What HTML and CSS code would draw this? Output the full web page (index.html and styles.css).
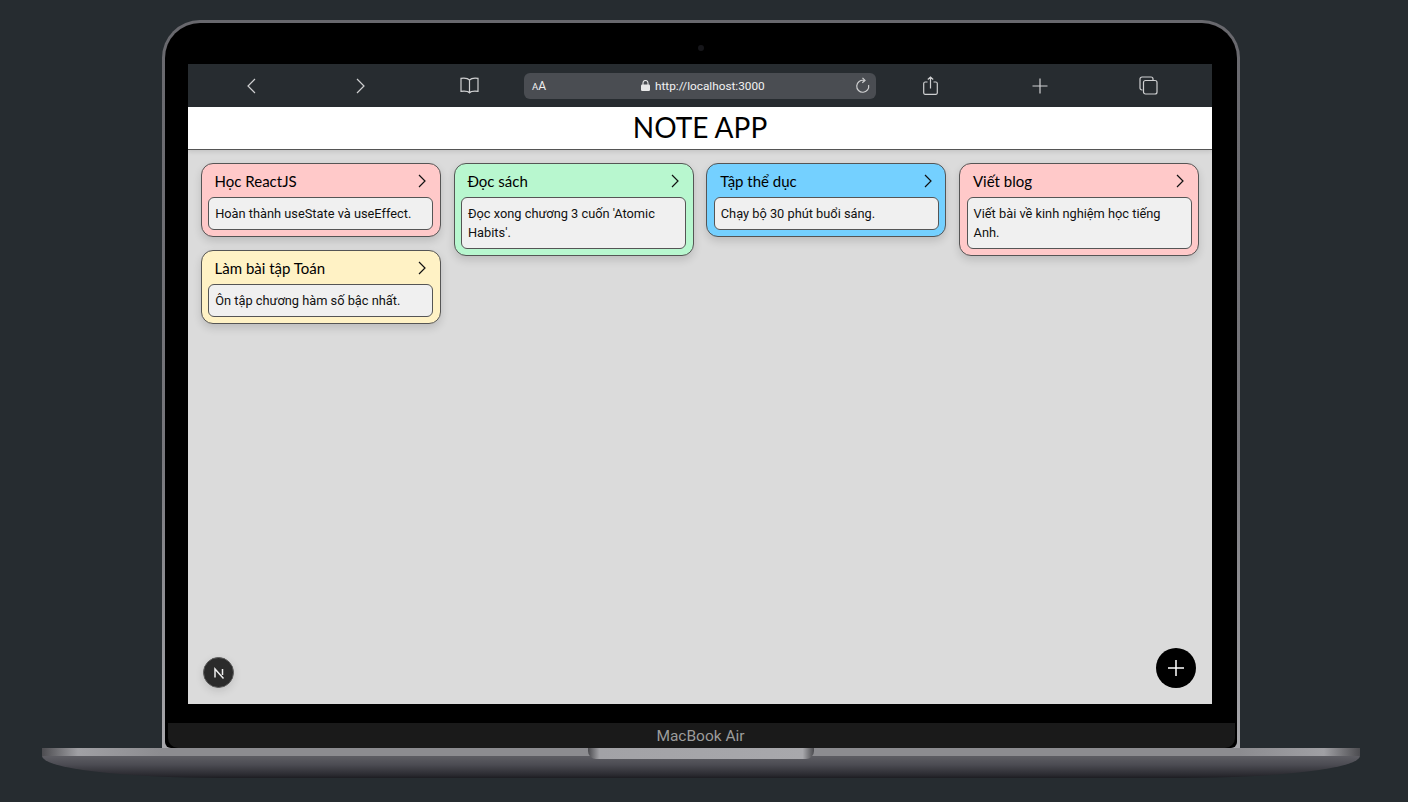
FILE: index.html
```html
<!DOCTYPE html>
<html lang="vi">

<head>
    <meta charset="UTF-8">
    <meta name="viewport" content="width=device-width, initial-scale=1.0">
    <title>Note App</title>
    <link rel="stylesheet" href="styles.css">
</head>

<body>
    <div class="macbook">
        <div class="lid">
            <div class="bezel">
                <div class="camera"></div>
                <div class="screen">
                    <!-- Thanh trinh duyet -->
                    <div class="toolbar">
                        <div class="tool">
                            <svg width="12" height="18" viewBox="0 0 12 18"><path d="M9 2 2 9l7 7"/></svg>
                        </div>
                        <div class="tool">
                            <svg width="12" height="18" viewBox="0 0 12 18"><path d="m2 2 7 7-7 7"/></svg>
                        </div>
                        <div class="tool">
                            <svg width="19" height="17" viewBox="0 0 19 17"><path d="M9.500 3C8 1.300 4.500.8 1 1.300v13c3.500-.4 7-.3 8.500 1.500 1.500-1.800 5-1.900 8.500-1.500v-13C14.500.8 11 1.300 9.500 3ZM9.500 3v12.800"/></svg>
                        </div>
                        <div class="address">
                            <span class="aa"><small>A</small>A</span>
                            <span class="url">
                                <svg width="9" height="11" viewBox="0 0 9 11"><rect x="0" y="4.500" width="9" height="6.500" rx="1.200"/><path class="shackle" d="M2 5V3a2.500 2.500 0 0 1 5 0v2"/></svg>
                                http://localhost:3000
                            </span>
                            <svg class="reload" width="15" height="17" viewBox="0 0 15 17"><path d="M9 3.400A6 6 0 1 0 13.600 8"/><path d="M7.500 .8 10 3.400 7.300 5.700"/></svg>
                        </div>
                        <div class="tool">
                            <svg width="15" height="19" viewBox="0 0 15 19"><path d="M4.500 6H2A1.500 1.500 0 0 0 .7 7.500v9.500A1.500 1.500 0 0 0 2 18.400h11a1.500 1.500 0 0 0 1.300-1.400V7.500A1.500 1.500 0 0 0 13 6h-2.500M7.500 12.500V1M4.800 3.500 7.500 1l2.700 2.500"/></svg>
                        </div>
                        <div class="tool">
                            <svg width="16" height="16" viewBox="0 0 16 16"><path d="M8 .5v15M.5 8h15"/></svg>
                        </div>
                        <div class="tool">
                            <svg width="19" height="19" viewBox="0 0 19 19"><path d="M3.500 14H3a2 2 0 0 1-2-2V3a2 2 0 0 1 2-2h9a2 2 0 0 1 2 2v1"/><rect x="4.500" y="4.500" width="13.500" height="13.500" rx="2"/></svg>
                        </div>
                    </div>

                    <div class="page">
                        <h1 class="app-title">NOTE APP</h1>

                        <div class="board">
                            <div class="column">
                                <div class="note pink">
                                    <div class="note-head">
                                        <span>Học ReactJS</span>
                                        <svg width="10" height="14" viewBox="0 0 10 14"><path d="m2 1 6 6-6 6"/></svg>
                                    </div>
                                    <p class="note-body">Hoàn thành useState và useEffect.</p>
                                </div>
                                <div class="note yellow">
                                    <div class="note-head">
                                        <span>Làm bài tập Toán</span>
                                        <svg width="10" height="14" viewBox="0 0 10 14"><path d="m2 1 6 6-6 6"/></svg>
                                    </div>
                                    <p class="note-body">Ôn tập chương hàm số bậc nhất.</p>
                                </div>
                            </div>
                            <div class="column">
                                <div class="note green">
                                    <div class="note-head">
                                        <span>Đọc sách</span>
                                        <svg width="10" height="14" viewBox="0 0 10 14"><path d="m2 1 6 6-6 6"/></svg>
                                    </div>
                                    <p class="note-body">Đọc xong chương 3 cuốn 'Atomic Habits'.</p>
                                </div>
                            </div>
                            <div class="column">
                                <div class="note blue">
                                    <div class="note-head">
                                        <span>Tập thể dục</span>
                                        <svg width="10" height="14" viewBox="0 0 10 14"><path d="m2 1 6 6-6 6"/></svg>
                                    </div>
                                    <p class="note-body">Chạy bộ 30 phút buổi sáng.</p>
                                </div>
                            </div>
                            <div class="column">
                                <div class="note pink">
                                    <div class="note-head">
                                        <span>Viết blog</span>
                                        <svg width="10" height="14" viewBox="0 0 10 14"><path d="m2 1 6 6-6 6"/></svg>
                                    </div>
                                    <p class="note-body">Viết bài về kinh nghiệm học tiếng Anh.</p>
                                </div>
                            </div>
                        </div>

                        <!-- Nut Next dev va nut them ghi chu -->
                        <div class="dev-badge">
                            <svg width="14" height="14" viewBox="0 0 14 14"><path d="M3 11.500V3l8.500 9.500M10.500 3v6"/></svg>
                        </div>
                        <button class="add-btn">
                            <svg width="16" height="16" viewBox="0 0 16 16"><path d="M8 0v16M0 8h16"/></svg>
                        </button>
                    </div>
                </div>
                <div class="chin">MacBook Air</div>
            </div>
        </div>
        <div class="base">
            <div class="notch"></div>
        </div>
    </div>
</body>

</html>
```

FILE: styles.css
```css
body {
    margin: 0;
    height: 802px;
    overflow: hidden;
    background-color: #262c30;
    font-family: Roboto, Arial, sans-serif;
}

.macbook {
    display: flex;
    flex-direction: column;
    align-items: center;
    padding-top: 20px;
}

.lid {
    width: 1072px;
    height: 725px;
    padding: 3px 3px 0;
    margin-right: 6px;
    border-radius: 38px 38px 0 0;
    background: linear-gradient(#68686d, #77777c 60%, #a8a8ac);
}

.bezel {
    position: relative;
    height: 100%;
    box-sizing: border-box;
    padding: 41px 25px 0 23px;
    border-radius: 35px 35px 6px 6px;
    background-color: #000;
    display: flex;
    flex-direction: column;
}

.camera {
    position: absolute;
    top: 22px;
    left: 533px;
    width: 6px;
    height: 6px;
    border-radius: 50%;
    background-color: #16161a;
}

.screen {
    width: 1024px;
    height: 640px;
    flex-shrink: 0;
    display: flex;
    flex-direction: column;
}

.toolbar {
    height: 43px;
    flex-shrink: 0;
    padding: 0 9px;
    background-color: #272c30;
    display: flex;
    align-items: center;
}

.tool {
    width: 109px;
    display: flex;
    justify-content: center;
    align-items: center;
}

.toolbar svg {
    fill: none;
    stroke: #cfd0d1;
    stroke-width: 1.200;
}

.address {
    width: 352px;
    height: 26px;
    box-sizing: border-box;
    padding: 0 6px 0 8px;
    border-radius: 6px;
    background-color: #4a4d52;
    color: #f2f2f2;
    position: relative;
    display: flex;
    align-items: center;
    justify-content: space-between;
}

.aa {
    font-size: 12px;
}

.aa small {
    font-size: 9.500px;
}

.url {
    position: absolute;
    left: 117px;
    display: flex;
    align-items: center;
    gap: 5px;
    font-size: 11.800px;
}

.toolbar .url svg {
    fill: #e8e8e8;
    stroke: none;
}

.toolbar .url .shackle {
    fill: none;
    stroke: #e8e8e8;
    stroke-width: 1.100;
}

.page {
    position: relative;
    flex: 1;
    background-color: #dbdbdb;
}

.app-title {
    height: 42px;
    margin: 0;
    background-color: white;
    border-bottom: 1px solid #555;
    box-shadow: 0 2px 4px rgba(0, 0, 0, 0.1);
    color: #000;
    font-family: Lato, sans-serif;
    font-size: 28px;
    font-weight: 400;
    line-height: 40px;
    text-align: center;
}

.board {
    display: grid;
    grid-template-columns: repeat(4, 1fr);
    gap: 12.800px;
    padding: 12.800px;
}

.column {
    display: flex;
    flex-direction: column;
    gap: 12.800px;
}

.note {
    padding: 0 6.400px 6.400px;
    border: 1px solid #555;
    border-radius: 12px;
    box-shadow: 0 4px 8px rgba(0, 0, 0, 0.14);
}

.pink {
    background-color: #ffc9c9;
}

.yellow {
    background-color: #fff2c5;
}

.green {
    background-color: #b8f7cf;
}

.blue {
    background-color: #74d0ff;
}

.note-head {
    height: 32.800px;
    box-sizing: border-box;
    padding: 1px 6.400px 0;
    display: flex;
    justify-content: space-between;
    align-items: center;
    color: #000;
    font-family: Lato, sans-serif;
    font-size: 15px;
}

.note-head svg {
    fill: none;
    stroke: #111;
    stroke-width: 1.200;
}

.note-body {
    margin: 0;
    padding: 6px;
    border: 1px solid #555;
    border-radius: 6px;
    background-color: #f0f0f0;
    color: #111;
    font-size: 12.800px;
    line-height: 19px;
}

.dev-badge {
    position: absolute;
    left: 15px;
    bottom: 16px;
    width: 31px;
    height: 31px;
    box-sizing: border-box;
    border: 1px solid #5c5c5c;
    border-radius: 50%;
    background-color: #2b2b2b;
    box-shadow: 0 3px 8px rgba(0, 0, 0, 0.12);
    display: flex;
    justify-content: center;
    align-items: center;
}

.dev-badge svg {
    fill: none;
    stroke: #eee;
    stroke-width: 1.500;
}

.add-btn {
    position: absolute;
    right: 16px;
    bottom: 16px;
    width: 40px;
    height: 40px;
    padding: 0;
    border: none;
    border-radius: 50%;
    background-color: #000;
    cursor: pointer;
    display: flex;
    justify-content: center;
    align-items: center;
}

.add-btn svg {
    stroke: #fff;
    stroke-width: 1.500;
}

.chin {
    height: 25px;
    margin: 19px -23px 0 -20px;
    padding-right: 2px;
    border-radius: 0 0 10px 10px;
    background-color: #1a1a1a;
    color: #9c9c9c;
    font-size: 15.500px;
    line-height: 26px;
    text-align: center;
}

.base {
    position: relative;
    width: 1318px;
    height: 30px;
    margin-right: 6px;
    border-radius: 0 0 180px 180px / 0 0 22px 22px;
    background:
        linear-gradient(to right, #4c4c50 0, #a0a0a4 36px, #8c8c90 120px, #8c8c90 calc(100% - 120px), #a0a0a4 calc(100% - 36px), #4c4c50 100%) top / 100% 8px no-repeat,
        linear-gradient(#5c5c62 0, #5c5c62 30%, #4c4c53 55%, #2a2a30 90%, #1d1d22 100%);
}

.notch {
    position: absolute;
    top: 0;
    left: 546px;
    width: 226px;
    height: 11px;
    border-radius: 0 0 8px 8px;
    background: linear-gradient(to right, #4a4a4e, #a2a2a6 5%, #a8a8ac 95%, #4a4a4e);
}
```
